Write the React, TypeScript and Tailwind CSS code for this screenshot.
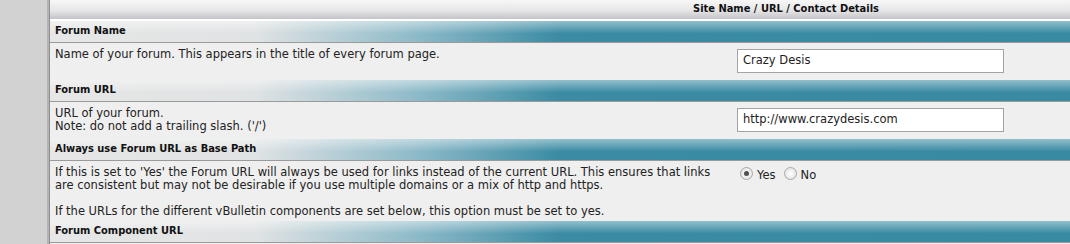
const body = { fontFamily: '"DejaVu Sans", Verdana, sans-serif' };
const bold = { fontFamily: '"DejaVu Sans Condensed", "DejaVu Sans", Tahoma, sans-serif' };

function SectionHeader({ title }: { title: string }) {
  return (
    <div
      className="h-[22px] flex items-center pl-[5px] border-b border-[#9a9a9a] bg-[linear-gradient(to_bottom,rgba(255,255,255,0.45),rgba(255,255,255,0)_60%),linear-gradient(to_right,#e6e6e6_0%,#e0e3e4_20%,#8dbac8_36%,#3a8ba3_50%,#388aa2_100%)] text-[11px] font-bold text-[#111]"
      style={bold}
    >
      {title}
    </div>
  );
}

function TextInput({ value }: { value: string }) {
  return (
    <div className="w-[267px] h-[24px] bg-white border border-[#a3a3a3] flex items-center px-[5px] text-[11.5px] text-[#222]">
      {value}
    </div>
  );
}

function Radio({ checked, label }: { checked?: boolean; label: string }) {
  return (
    <span className="flex items-start gap-[4px]">
      <span className="w-[13px] h-[13px] rounded-full border border-[#a8a8a8] bg-[radial-gradient(circle,#ffffff_0%,#dcdcdc_100%)] flex items-center justify-center">
        {checked && <span className="w-[5px] h-[5px] rounded-full bg-[#505050]" />}
      </span>
      <span className="mt-[2px] leading-[13px]">{label}</span>
    </span>
  );
}

function Row({ left, right, h }: { left: React.ReactNode; right: React.ReactNode; h: string }) {
  return (
    <div className={`flex bg-[#efefef] ${h}`}>
      <div className="w-[680px] shrink-0 px-[5px] pt-[5px] leading-[13px]">{left}</div>
      <div className="flex-1 pl-[7px] pt-[6px]">{right}</div>
    </div>
  );
}

export default function App() {
  return (
    <div className="w-[1070px] h-[244px] overflow-hidden flex bg-[#d3d3d3] text-[11.5px] text-[#222]" style={body}>
      <div className="w-[47px] shrink-0 bg-[#d2d2d2]" />
      <div className="w-[3px] shrink-0 bg-[#b4b4b4] border-r border-[#8e8e8e]" />
      <div className="flex-1 min-w-0 bg-[#efefef]">
        <div
          className="h-[21px] pl-[643px] flex items-center bg-[linear-gradient(to_bottom,#f7f7f7,#e6e6e8_55%,#c4c4c8)] text-[11px] font-bold text-[#111] border-b-2 border-white"
          style={bold}
        >
          Site Name / URL / Contact Details
        </div>
        <SectionHeader title="Forum Name" />
        <Row
          h="h-[37px]"
          left={<p>Name of your forum. This appears in the title of every forum page.</p>}
          right={<TextInput value="Crazy Desis" />}
        />
        <SectionHeader title="Forum URL" />
        <Row
          h="h-[37px]"
          left={
            <p>
              URL of your forum.
              <br />
              Note: do not add a trailing slash. ('/')
            </p>
          }
          right={<TextInput value="http://www.crazydesis.com" />}
        />
        <SectionHeader title="Always use Forum URL as Base Path" />
        <Row
          h="h-[60px]"
          left={
            <p>
              If this is set to 'Yes' the Forum URL will always be used for links instead of the current URL. This ensures that links
              <br />
              are consistent but may not be desirable if you use multiple domains or a mix of http and https.
              <br />
              <br />
              If the URLs for the different vBulletin components are set below, this option must be set to yes.
            </p>
          }
          right={
            <div className="flex items-start gap-[8px] pl-[3px]">
              <Radio checked label="Yes" />
              <Radio label="No" />
            </div>
          }
        />
        <SectionHeader title="Forum Component URL" />
        <div className="h-[10px] bg-[#efefef]" />
      </div>
    </div>
  );
}
